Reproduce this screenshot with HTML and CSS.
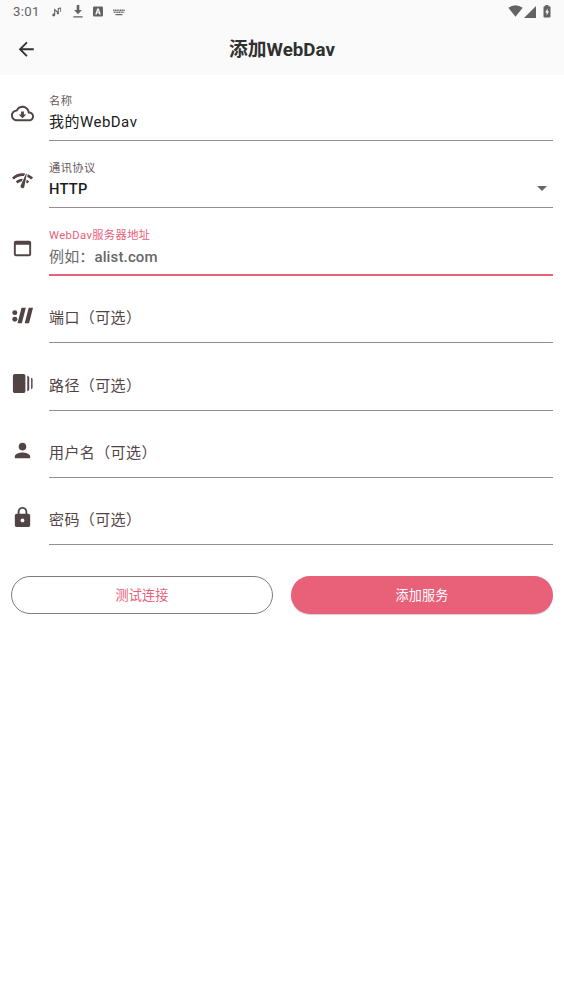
FILE: index.html
```html
<!DOCTYPE html>
<html lang="zh-CN">
<head>
<meta charset="utf-8">
<title>添加WebDav</title>
<link rel="stylesheet" href="styles.css">
</head>
<body>
<header class="header">
  <div class="status">
    <span class="clock">3:01</span>
    <svg class="s-note" viewBox="0 0 10 10"><path d="M2.700 8V2.600L6.300 6V1.500L9 1" fill="none" stroke="currentColor" stroke-width="1.100"/><path d="M8.600 1v4" fill="none" stroke="currentColor" stroke-width=".8"/><circle cx="1.700" cy="8" r="1.400"/><circle cx="5.800" cy="6.300" r="1.100"/></svg>
    <svg class="s-down" viewBox="0 0 10 13"><path d="M3.700 0h2.600v5h2.600L5 9.300 1.100 5h2.600zM.3 11.200h9.400v1.200H.3z"/></svg>
    <svg class="s-app" viewBox="0 0 10 11"><path fill-rule="evenodd" d="M1.200.5h7.600Q10 .5 10 1.700v7.600q0 1.200-1.200 1.200H1.200Q0 10.500 0 9.300V1.700Q0 .5 1.200.5zM4.200 2.600 2.200 8.500h1.500l.35-1.200h1.900l.35 1.200h1.500L5.800 2.600zm.2 3.600.6-2 .6 2z"/></svg>
    <svg class="s-keys" viewBox="0 0 12 7"><path d="M.2 1.200h11.600M.7 3.200h10.600" fill="none" stroke="currentColor" stroke-width="1.500" stroke-dasharray="1.200 .5"/><path d="M2.500 5h7v1.200h-7z"/></svg>
    <span class="spacer"></span>
    <svg class="s-wifi" viewBox="0 0 15 12"><path d="M.3 2.800Q7.500-2.200 14.700 2.800L7.500 11.700z"/></svg>
    <svg class="s-signal" viewBox="0 0 12 12"><path d="M12 0v12H0z"/></svg>
    <svg class="s-battery" viewBox="0 0 8 13"><path fill-rule="evenodd" d="M2.200 0h3.200v1.200h1.100q1 0 1 1v9.300q0 1-1 1h-5q-1 0-1-1V2.200q0-1 1-1h.7zM4.600 3.300 2.200 7.600h1.400v3L6 6.300H4.600z"/></svg>
  </div>
  <div class="bar">
    <svg class="back" viewBox="0 0 24 24"><path d="M20 11H7.830l5.590-5.590L12 4l-8 8 8 8 1.410-1.410L7.830 13H20z"/></svg>
    <h1 class="title">添加WebDav</h1>
  </div>
</header>
<main class="form">
  <div class="row">
    <svg class="icon" viewBox="0 0 24 24"><path d="M19.350 10.040C18.670 6.590 15.640 4 12 4 9.110 4 6.600 5.640 5.350 8.040 2.340 8.360 0 10.910 0 14c0 3.310 2.690 6 6 6h13c2.760 0 5-2.240 5-5 0-2.640-2.050-4.780-4.650-4.960zM19 18H6c-2.210 0-4-1.790-4-4 0-2.050 1.530-3.760 3.560-3.970l1.070-.11.5-.95C8.080 7.140 9.940 6 12 6c2.620 0 4.880 1.860 5.390 4.430l.3 1.500 1.530.11c1.560.1 2.780 1.410 2.780 2.960 0 1.650-1.350 3-3 3zm-5.550-8h-2.900v3H8l4 4 4-4h-2.550z"/></svg>
    <div class="field"><span class="label">名称</span><span class="value">我的WebDav</span></div>
  </div>
  <div class="row">
    <svg class="icon" viewBox="0 0 24 24"><path d="M15.900 5c-.17 0-.32.09-.41.23l-.07.15-5.180 11.650c-.16.29-.26.61-.26.96 0 1.110.9 2.010 2.010 2.010.96 0 1.770-.68 1.960-1.590l.01-.03L16.400 5.500c0-.28-.22-.5-.5-.5zM1 9l2 2c2.880-2.880 6.790-4.080 10.530-3.620l1.190-2.680C9.890 3.840 4.740 5.270 1 9zm20 2 2-2c-1.640-1.640-3.550-2.820-5.590-3.570l-.53 2.820c1.500.62 2.900 1.530 4.120 2.750zm-4 4 2-2c-.8-.8-1.700-1.420-2.660-1.890l-.55 2.920c.42.27.83.59 1.210.97zM5 13l2 2c1.130-1.130 2.560-1.790 4.030-2l1.280-2.880c-2.630-.08-5.300.87-7.310 2.880z"/></svg>
    <div class="field"><span class="label">通讯协议</span><span class="value select">HTTP<svg class="caret" viewBox="0 0 10 5"><path d="M0 0h10L5 5z"/></svg></span></div>
  </div>
  <div class="row">
    <svg class="icon" viewBox="0 0 24 24"><path d="M19 4H5c-1.110 0-2 .9-2 2v12c0 1.100.89 2 2 2h14c1.100 0 2-.9 2-2V6c0-1.100-.89-2-2-2zm0 14H5V8h14z"/></svg>
    <div class="field focused"><span class="label">WebDav服务器地址</span><span class="value hint">例如：<span class="latin">alist.com</span></span></div>
  </div>
  <div class="row">
    <svg class="icon" viewBox="0 0 24 24"><circle cx="4" cy="9" r="2.600"/><circle cx="4" cy="16" r="2.600"/><path d="M11 4h4.500l-4.200 16H6.800zM18.500 4H23l-4.200 16h-4.500z"/></svg>
    <div class="field empty"><span class="placeholder">端口（可选）</span></div>
  </div>
  <div class="row lower">
    <svg class="icon" viewBox="0 0 24 24"><path d="M17 4c1.100.3 2 1 2 2v12c0 1-.9 1.700-2 2zM2 4c0-1.100.9-2 2-2h9c1.100 0 2 .9 2 2v16c0 1.100-.9 2-2 2H4c-1.100 0-2-.9-2-2zM21 6c.83.3 1.500.8 1.500 1.500v9c0 .7-.67 1.200-1.500 1.500z"/></svg>
    <div class="field empty"><span class="placeholder">路径（可选）</span></div>
  </div>
  <div class="row">
    <svg class="icon" viewBox="0 0 24 24"><path d="M12 12c2.210 0 4-1.790 4-4s-1.790-4-4-4-4 1.790-4 4 1.790 4 4 4zm0 2c-2.670 0-8 1.340-8 4v2h16v-2c0-2.660-5.330-4-8-4z"/></svg>
    <div class="field empty"><span class="placeholder">用户名（可选）</span></div>
  </div>
  <div class="row last">
    <svg class="icon" viewBox="0 0 24 24"><path d="M18 8h-1V6c0-2.760-2.240-5-5-5S7 3.240 7 6v2H6c-1.100 0-2 .9-2 2v10c0 1.100.9 2 2 2h12c1.100 0 2-.9 2-2V10c0-1.100-.9-2-2-2zm-6 9c-1.100 0-2-.9-2-2s.9-2 2-2 2 .9 2 2-.9 2-2 2zm3.100-9H8.900V6c0-1.710 1.390-3.100 3.100-3.100s3.100 1.390 3.100 3.100z"/></svg>
    <div class="field empty"><span class="placeholder">密码（可选）</span></div>
  </div>
  <div class="actions">
    <button class="btn outlined">测试连接</button>
    <button class="btn filled">添加服务</button>
  </div>
</main>
</body>
</html>
```
FILE: styles.css
```css
* { box-sizing: border-box; }
body {
  margin: 0;
  min-height: 1004px;
  background: #fff;
  color: #201a1b;
  font-family: Roboto, "Noto Sans CJK SC", sans-serif;
}
svg { fill: currentColor; flex: none; display: block; }
.header { height: 75px; background: #fafafa; }
.status {
  height: 23px;
  padding: 0 13px;
  display: flex;
  align-items: center;
  color: #636363;
}
.clock { font-size: 13.2px; line-height: 22px; letter-spacing: .3px; width: 39px; }
.s-note { width: 10px; height: 10px; margin-right: 11px; }
.s-down { width: 10px; height: 13px; margin-right: 10px; }
.s-app { width: 10px; height: 11px; margin-right: 10px; }
.s-keys { width: 12px; height: 7px; margin-top: 1px; }
.spacer { flex: 1; }
.s-wifi { width: 15px; height: 12px; margin: 0 1px 2px 0; }
.s-signal { width: 12px; height: 12px; margin: 0 7px 0 0; }
.s-battery { width: 8px; height: 13px; margin-bottom: 1px; }
.bar {
  height: 52px;
  display: grid;
  grid-template-columns: 49px 1fr 49px;
  align-items: center;
}
.back { width: 22.5px; height: 22.5px; margin-left: 15px; color: #303030; }
.title {
  margin: 0;
  padding-top: 2px;
  color: #303030;
  font-size: 18.75px;
  line-height: 26px;
  font-weight: 700;
  text-align: center;
}
.form { padding: 0 11px; }
.row { height: 67.4px; display: flex; gap: 15px; }
.row:first-child { height: 66px; }
.row:first-child .icon { margin-top: 27.4px; }
.icon { width: 23px; height: 23px; margin-top: 28.4px; color: #524345; }
.lower .icon { margin-top: 29px; }
.field {
  flex: 1;
  display: flex;
  flex-direction: column;
  justify-content: flex-end;
  border-bottom: 1px solid #978b8d;
}
.label {
  color: #665a5c;
  font-size: 11.25px;
  line-height: 16px;
  letter-spacing: .38px;
}
.value {
  font-size: 15px;
  line-height: 22px;
  letter-spacing: .47px;
  margin: 1px 0 7px;
}
.select {
  font-weight: 500;
  font-size: 14.7px;
  letter-spacing: .25px;
  margin: 1px 0 7px;
  display: flex;
  align-items: center;
  justify-content: space-between;
}
.caret { width: 10px; height: 5px; margin: 0 6px 2px 0; color: #666; }
.focused { border-bottom: 2px solid #e96079; }
.focused .label { color: #e96079; }
.hint { color: #686868; letter-spacing: .14px; margin: 2px 0 6px; }
.latin { font-weight: 500; }
.placeholder {
  color: #524345;
  font-size: 15px;
  line-height: 22px;
  letter-spacing: .4px;
  margin-bottom: 13px;
}
.last .placeholder { margin-bottom: 13.4px; }
.actions { display: grid; grid-template-columns: 1fr 1fr; gap: 18px; padding-top: 30.6px; }
.btn {
  height: 38px;
  border-radius: 19px;
  padding: 2px 0 0;
  font-family: inherit;
  font-size: 13.1px;
  line-height: 20px;
  letter-spacing: .1px;
}
.outlined { background: #fff; border: 1px solid #85777a; color: #e96079; }
.filled { background: #e96079; border: 0; color: #fff; box-shadow: 0 1px 1px rgba(0, 0, 0, .18); }
```
